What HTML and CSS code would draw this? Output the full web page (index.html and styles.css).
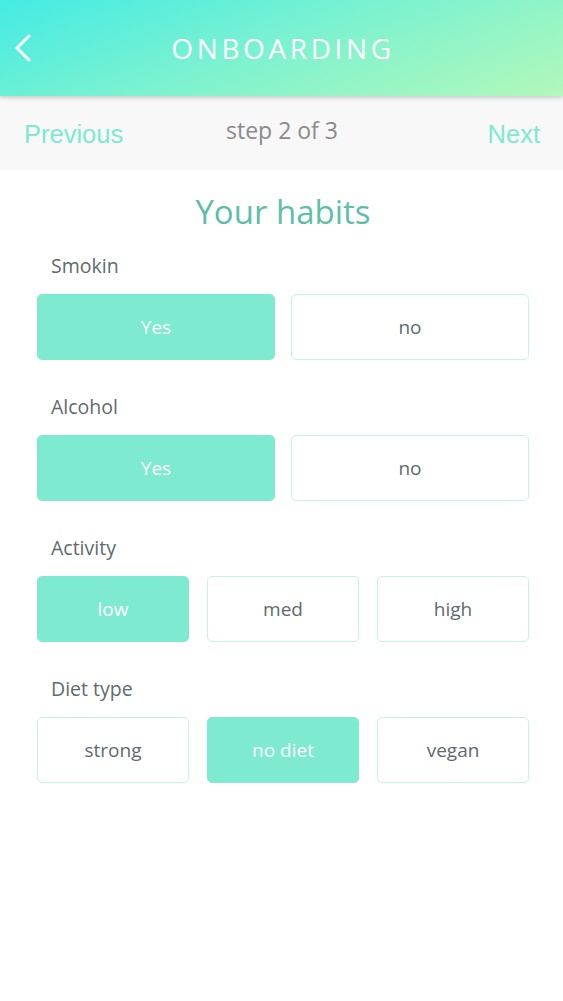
FILE: index.html
```html
<!DOCTYPE html>
<html>
<head>
<meta charset="utf-8">
<link rel="stylesheet" href="styles.css">
</head>
<body>
<header class="appbar">
  <button class="back" aria-label="Back">
    <svg width="18" height="28" viewBox="0 0 18 28"><polyline points="15,2 3,14 15,26" fill="none" stroke="#fff" stroke-width="3" stroke-linecap="round" stroke-linejoin="round"/></svg>
  </button>
  <h1 class="title">ONBOARDING</h1>
</header>
<nav class="stepper">
  <span class="link prev">Previous</span>
  <span class="step">step 2 of 3</span>
  <span class="link next">Next</span>
</nav>
<main class="content">
  <h2 class="heading">Your habits</h2>
  <section class="group">
    <div class="label">Smokin</div>
    <div class="options two">
      <div class="opt selected">Yes</div>
      <div class="opt">no</div>
    </div>
  </section>
  <section class="group">
    <div class="label">Alcohol</div>
    <div class="options two">
      <div class="opt selected">Yes</div>
      <div class="opt">no</div>
    </div>
  </section>
  <section class="group">
    <div class="label">Activity</div>
    <div class="options three">
      <div class="opt selected">low</div>
      <div class="opt">med</div>
      <div class="opt">high</div>
    </div>
  </section>
  <section class="group">
    <div class="label">Diet type</div>
    <div class="options three">
      <div class="opt">strong</div>
      <div class="opt selected">no diet</div>
      <div class="opt">vegan</div>
    </div>
  </section>
</main>
</body>
</html>
```
FILE: styles.css
```css
* { box-sizing: border-box; }
html, body { margin: 0; padding: 0; background: #fff; }
body { font-family: "Open Sans", "Noto Sans", sans-serif; width: 563px; height: 1001px; overflow: hidden; }

.appbar {
  position: relative;
  height: 96px;
  display: flex;
  align-items: center;
  justify-content: center;
  background: linear-gradient(160deg, #44ebe4 0%, #7ef2cf 50%, #b2f8ba 100%);
  box-shadow: 0 2px 4px rgba(0,0,0,0.18);
  z-index: 1;
}
.back {
  position: absolute;
  left: 14px;
  top: 34px;
  background: none;
  border: 0;
  padding: 0;
  width: 18px;
  height: 28px;
}
.back svg { display: block; }
.title {
  margin: 0;
  color: #fff;
  font-weight: 400;
  font-size: 28px;
  letter-spacing: 3.6px;
  padding-left: 3px;
}

.stepper {
  height: 74px;
  background: #f8f8f8;
  display: grid;
  grid-template-columns: 1fr auto 1fr;
  align-items: center;
  padding: 0 23px 0 24px;
}
.link { font-family: "Liberation Sans", Arial, sans-serif; font-size: 25.5px; color: #7de9cf; margin-top: 3px; }
.next { justify-self: end; }
.step { font-size: 23px; color: #8a8a8a; margin-top: -6px; }

.content { padding: 20px 34px 0 37px; }
.heading {
  margin: 0 0 18px;
  text-align: center;
  font-weight: 400;
  font-size: 33px;
  color: #5dbfa7;
  line-height: 44px;
}
.group { margin-bottom: 33px; }
.label { font-size: 19.5px; color: #5e6a6d; padding-left: 14px; line-height: 28px; margin-bottom: 14px; }
.options { display: grid; gap: 16px; }
.options.two { grid-template-columns: 1fr 1fr; }
.options.three { grid-template-columns: 1fr 1fr 1fr; gap: 18px; }
.opt {
  height: 66px;
  display: flex;
  align-items: center;
  justify-content: center;
  border: 1px solid #c6f3e8;
  border-radius: 5px;
  font-size: 19px;
  color: #5e6a6d;
  background: #fff;
}
.opt.selected { background: #7eeacf; border-color: #7eeacf; color: #fff; }
```
